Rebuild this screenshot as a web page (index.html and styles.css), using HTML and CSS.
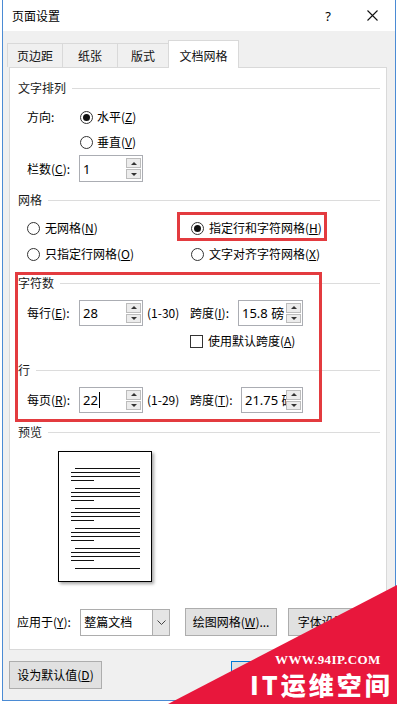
FILE: index.html
```html
<!DOCTYPE html>
<html lang="zh-CN">
<head>
<meta charset="UTF-8" />
<title>页面设置</title>
<link rel="stylesheet" href="styles.css">
</head>
<body>

<div class="window">
  <div class="titlebar">
    <span class="title">页面设置</span>
    <span class="help">?</span>
    <span class="close"><svg width="11" height="11" viewBox="0 0 11 11"><path d="M0.5 0.5L10.5 10.5M10.5 0.5L0.5 10.5" stroke="#111" stroke-width="1.1"/></svg></span>
  </div>

  <div class="tabs">
    <div class="tab t1">页边距</div>
    <div class="tab t2">纸张</div>
    <div class="tab t3">版式</div>
    <div class="tab active">文档网格</div>
  </div>

  <div class="panel">
    <!-- 文字排列 -->
    <div class="group-title">文字排列</div>
    <div class="row r-dir">
      <span class="label">方向:</span>
      <span class="radio on"></span><span>水平(<u>Z</u>)</span>
    </div>
    <div class="row r-vert">
      <span class="radio"></span><span>垂直(<u>V</u>)</span>
    </div>
    <div class="row r-cols">
      <span class="label">栏数(<u>C</u>):</span>
      <div class="spin"><span class="val">1</span><span class="btns"><i class="up"></i><i class="down"></i></span></div>
    </div>

    <!-- 网格 -->
    <div class="group-title gt-grid">网格</div>
    <div class="row r-grid1">
      <div class="col"><span class="radio"></span><span>无网格(<u>N</u>)</span></div>
      <span class="radio on"></span><span>指定行和字符网格(<u>H</u>)</span>
    </div>
    <div class="row r-grid2">
      <div class="col"><span class="radio"></span><span>只指定行网格(<u>O</u>)</span></div>
      <span class="radio"></span><span>文字对齐字符网格(<u>X</u>)</span>
    </div>

    <!-- 字符数 -->
    <div class="group-title gt-chars">字符数</div>
    <div class="row r-num">
      <span class="label">每行(<u>E</u>):</span>
      <div class="spin"><span class="val">28</span><span class="btns"><i class="up"></i><i class="down"></i></span></div>
      <span class="range">(1-30)</span>
      <span class="label2">跨度(<u>I</u>):</span>
      <div class="spin wide"><span class="val">15.8 磅</span><span class="btns"><i class="up"></i><i class="down"></i></span></div>
    </div>
    <div class="row r-check">
      <span class="check"></span><span>使用默认跨度(<u>A</u>)</span>
    </div>

    <!-- 行 -->
    <div class="group-title gt-lines">行</div>
    <div class="row r-num">
      <span class="label">每页(<u>R</u>):</span>
      <div class="spin"><span class="val">22<b class="caret"></b></span><span class="btns"><i class="up"></i><i class="down"></i></span></div>
      <span class="range">(1-29)</span>
      <span class="label2 l-t">跨度(<u>T</u>):</span>
      <div class="spin narrow"><span class="val">21.75 磅</span><span class="btns"><i class="up"></i><i class="down"></i></span></div>
    </div>

    <!-- 预览 -->
    <div class="group-title gt-preview">预览</div>
    <div class="page">
      <div class="para"><i class="first"></i><i></i><i></i><i class="last"></i></div>
      <div class="para"><i class="first"></i><i></i><i></i><i class="last"></i></div>
      <div class="para"><i class="first"></i><i></i><i></i><i class="last"></i></div>
      <div class="para"><i class="first"></i><i></i><i></i><i class="last"></i></div>
      <div class="para"><i class="first"></i><i></i><i></i><i class="last"></i></div>
      <div class="para"><i class="first"></i></div>
    </div>

    <div class="row r-apply">
      <span class="label-apply">应用于(<u>Y</u>):</span>
      <div class="select">
        <span class="val">整篇文档</span>
        <span class="arrow"><svg width="9" height="5" viewBox="0 0 9 5"><path d="M0.5 0.5L4.5 4.5L8.5 0.5" fill="none" stroke="#444" stroke-width="1"/></svg></span>
      </div>
      <div class="btn btn-draw">绘图网格(<u>W</u>)...</div>
      <div class="btn btn-font">字体设置(<u>F</u>)...</div>
    </div>
  </div>

  <div class="footer">
    <div class="btn">设为默认值(<u>D</u>)</div>
    <div class="btn btn-ok"></div>
    <div class="btn btn-cancel"></div>
  </div>
</div>

<!-- annotations -->
<div class="mark mark-grid"></div>
<div class="mark mark-chars"></div>

<div class="ribbon">
  <div class="tri"></div>
  <span class="site">WWW.94IP.COM</span>
  <span class="brand">IT运维空间</span>
</div>

</body>
</html>
```

FILE: styles.css
```css
* {
  box-sizing: border-box;
}

body {
  margin: 0;
  width: 397px;
  height: 704px;
  overflow: hidden;
  position: relative;
  background: #fff;
  font-family: "Noto Sans CJK SC", "Noto Sans", sans-serif;
  font-size: 12px;
  line-height: 16px;
  color: #000;
}

u {
  text-decoration: underline;
  text-underline-offset: 1px;
}

.window {
  margin-left: 2px;
  width: 394px;
  height: 701px;
  background: #f0f0f0;
  border: 1px solid #4b8bd4;
  border-top: none;
}

/* Title bar */
.titlebar {
  height: 31px;
  background: #fff;
  display: flex;
  align-items: center;
  padding-left: 9px;
}
.help {
  margin-left: auto;
  margin-right: 36px;
  font-family: "Noto Sans", sans-serif;
  font-size: 13px;
}
.close {
  display: flex;
  margin-right: 17px;
}

/* Tabs */
.tabs {
  display: flex;
  align-items: flex-end;
  height: 36px;
  padding-left: 4px;
}
.tab {
  height: 24px;
  border: 1px solid #d9d9d9;
  border-bottom: none;
  margin-right: -1px;
  display: flex;
  align-items: center;
  justify-content: center;
  color: #111;
}
.t1 { width: 56px; }
.t2 { width: 56px; }
.t3 { width: 52px; }
.tab.active {
  width: 71px;
  height: 28px;
  margin-bottom: -1px;
  padding-top: 3px;
  background: #fff;
  position: relative;
  z-index: 1;
}

/* Panel */
.panel {
  margin-left: 6px;
  width: 378px;
  height: 583px;
  background: #fff;
  border: 1px solid #d9d9d9;
  padding: 10px 6px 0 0;
}
.group-title {
  display: flex;
  align-items: center;
  height: 20px;
  padding-left: 8px;
  color: #1a1a1a;
}
.group-title::after {
  content: "";
  flex: 1;
  border-top: 1px solid #dcdcdc;
  margin-left: 6px;
}
.gt-grid { margin-top: 8px; }
.gt-chars { margin-top: 9px; }
.gt-lines { margin-top: 9px; }
.gt-preview { margin-top: 9px; }

.row {
  display: flex;
  align-items: center;
  padding-left: 17px;
}
.r-dir { margin-top: 9px; height: 20px; }
.r-vert { margin-top: 5px; height: 20px; padding-left: 70px; }
.r-cols { margin-top: 3px; height: 27px; }
.r-grid1 { margin-top: 8px; height: 20px; }
.r-grid2 { margin-top: 6px; height: 20px; }
.r-num { margin-top: 7px; height: 26px; }
.r-check { margin-top: 5px; height: 20px; padding-left: 180px; }
.r-apply { margin-top: 26px; height: 28px; padding-left: 7px; }

.label { width: 52px; }
.label2 { width: 48px; }
.label2.l-t { width: 51px; }
.range { width: 43px; margin-left: 4px; }
.col {
  display: flex;
  align-items: center;
  width: 164px;
}

/* Radios and checkbox */
.radio {
  width: 13px;
  height: 13px;
  border: 1px solid #333;
  border-radius: 50%;
  background: #fff;
  margin-right: 5px;
  display: flex;
  align-items: center;
  justify-content: center;
}
.r-dir .radio { margin-left: 1px; margin-right: 4px; }
.r-vert .radio { margin-right: 4px; }
.radio.on::after {
  content: "";
  width: 7px;
  height: 7px;
  border-radius: 50%;
  background: #111;
}
.check {
  width: 13px;
  height: 13px;
  border: 1px solid #333;
  background: #fff;
  margin-right: 5px;
}

/* Spin boxes */
.spin {
  display: flex;
  width: 64px;
  height: 27px;
  border: 1px solid #abadb3;
  background: #fff;
}
.r-num .spin { height: 26px; }
.spin.wide { width: 65px; }
.spin.narrow { width: 62px; }
.spin .val {
  flex: 1;
  min-width: 0;
  overflow: hidden;
  white-space: nowrap;
  padding-left: 3px;
  display: flex;
  align-items: center;
  font-family: "Noto Sans", "Noto Sans CJK SC", sans-serif;
  font-size: 13px;
}
.caret {
  display: inline-block;
  width: 1px;
  height: 16px;
  margin-left: 1px;
  background: #000;
}
.spin .btns {
  width: 16px;
  display: flex;
  flex-direction: column;
  gap: 1px;
  padding: 2px 1px 2px 0;
}
.spin .btns i {
  flex: 1;
  background: #ececec;
  border: 1px solid #bcbcbc;
  display: flex;
  align-items: center;
  justify-content: center;
}
.spin .up::before {
  content: "";
  border-left: 3px solid transparent;
  border-right: 3px solid transparent;
  border-bottom: 3px solid #333;
}
.spin .down::before {
  content: "";
  border-left: 3px solid transparent;
  border-right: 3px solid transparent;
  border-top: 3px solid #333;
}

/* Preview page */
.page {
  margin: 9px 0 0 48px;
  width: 94px;
  height: 131px;
  background: #fff;
  border: 1px solid #000;
  box-shadow: 2px 2px 3px rgba(0,0,0,0.35);
  padding: 16px 0 0 12px;
}
.para {
  display: flex;
  flex-direction: column;
  gap: 3px;
  margin-bottom: 7px;
}
.para i {
  display: block;
  width: 69px;
  height: 1px;
  background: #111;
}
.para .first { margin-left: 4px; width: 65px; }
.para .last { width: 23px; }

/* Apply row */
.label-apply { width: 64px; }
.select {
  display: flex;
  width: 91px;
  height: 27px;
  border: 1px solid #adadad;
  background: #fff;
}
.select .val {
  flex: 1;
  padding-left: 3px;
  display: flex;
  align-items: center;
}
.select .arrow {
  width: 17px;
  background: #e5e5e5;
  border-left: 1px solid #adadad;
  display: flex;
  align-items: center;
  justify-content: center;
}

/* Buttons */
.btn {
  width: 93px;
  height: 28px;
  background: #e1e1e1;
  border: 1px solid #adadad;
  display: flex;
  align-items: center;
  justify-content: center;
  white-space: nowrap;
}
.btn-draw { margin-left: 15px; }
.btn-font { margin-left: 11px; }

.footer {
  display: flex;
  padding: 11px 0 0 6px;
}
.btn-ok {
  width: 75px;
  margin-left: 129px;
  border: 1px solid #0078d7;
}
.btn-cancel {
  width: 75px;
  margin-left: 7px;
}

/* Red annotation boxes */
.mark {
  position: absolute;
  border: 3px solid #e33b3f;
}
.mark-grid {
  left: 177px;
  top: 212px;
  width: 150px;
  height: 29px;
}
.mark-chars {
  left: 15px;
  top: 272px;
  width: 307px;
  height: 150px;
}

/* Watermark corner */
.ribbon {
  position: absolute;
  left: 168px;
  top: 585px;
  width: 229px;
  height: 119px;
}
.ribbon .tri {
  position: absolute;
  inset: 0;
  background: #e8173c;
  clip-path: polygon(0 100%, 100% 0, 100% 100%);
}
.ribbon .site {
  position: absolute;
  left: 107px;
  top: 67px;
  color: #fff;
  white-space: nowrap;
  font-family: "Liberation Serif", serif;
  font-weight: bold;
  font-size: 13px;
  letter-spacing: 0.4px;
}
.ribbon .brand {
  position: absolute;
  left: 82px;
  top: 84px;
  color: #fff;
  white-space: nowrap;
  font-family: "Noto Sans CJK SC", sans-serif;
  font-weight: 900;
  font-size: 25px;
  line-height: 30px;
  letter-spacing: 3px;
}
```
